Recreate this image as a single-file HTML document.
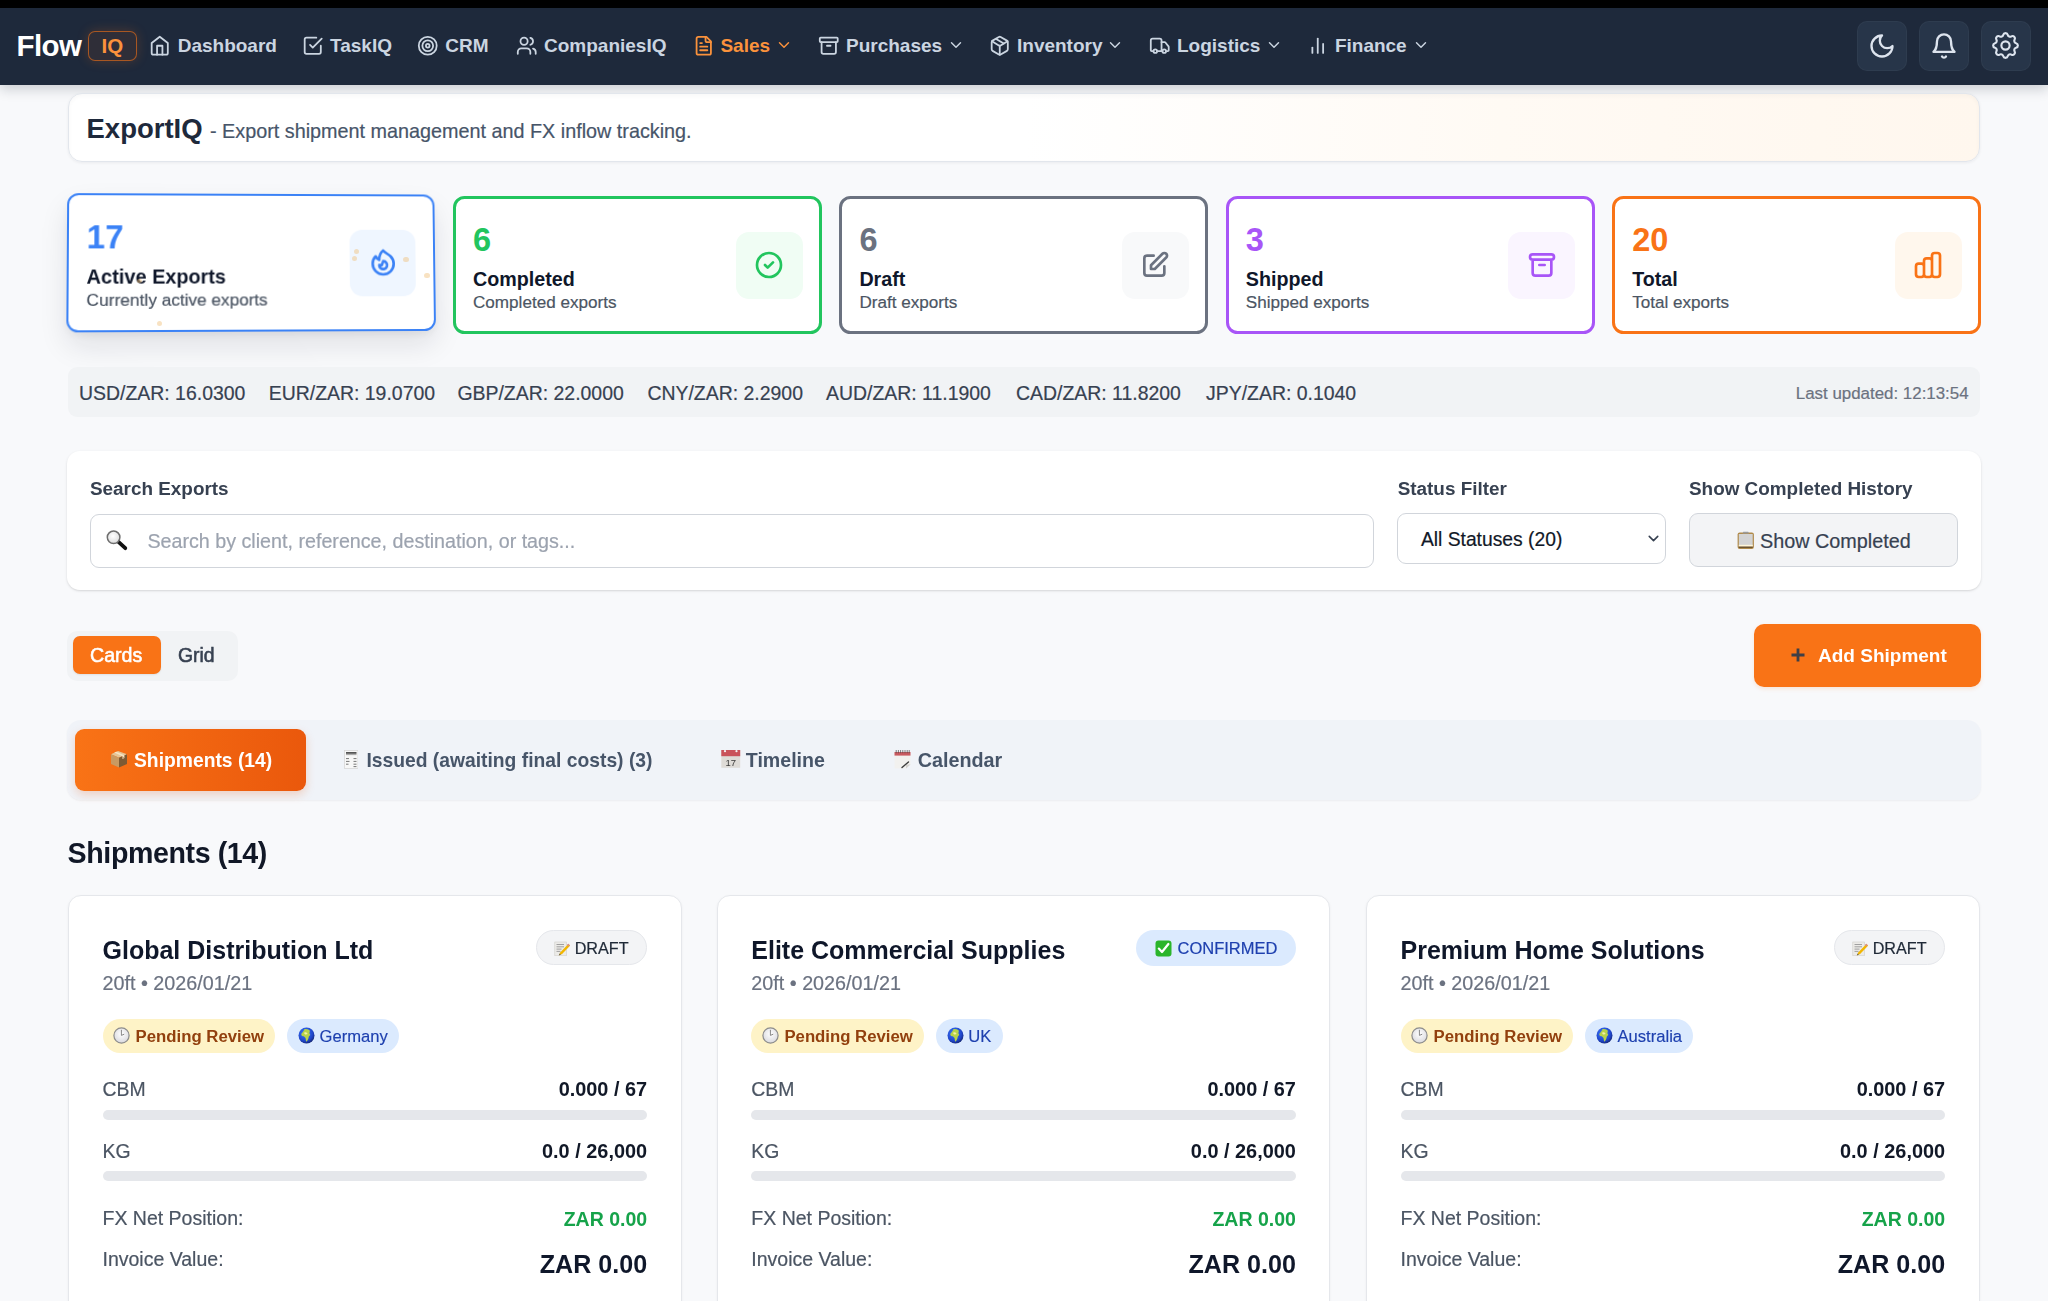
<!DOCTYPE html>
<html><head><meta charset="utf-8"><title>ExportIQ</title>
<style>
html,body{margin:0;padding:0}
body{width:2048px;height:1301px;overflow:hidden;position:relative;background:#f8f9fb;font-family:"Liberation Sans",sans-serif;}
.t{position:absolute;line-height:1;white-space:nowrap}
svg{display:block}
</style></head><body>
<div style="position:absolute;left:0.0px;top:0.0px;width:2048.0px;height:8.0px;box-sizing:border-box;background:#000"></div><div style="position:absolute;left:0.0px;top:8.0px;width:2048.0px;height:77.0px;box-sizing:border-box;background:#1e293b;box-shadow:0 4px 12px rgba(15,23,42,.2)"></div><div class="t" style="left:16.6px;top:31.0px;font-size:29.5px;color:#ffffff;font-weight:700;letter-spacing:-0.6px">Flow</div><div style="position:absolute;left:88.3px;top:31.0px;width:49.0px;height:30.0px;box-sizing:border-box;background:rgba(249,115,22,.08);border:1.3px solid rgba(249,115,22,.6);border-radius:7px;box-shadow:0 0 12px rgba(249,115,22,.22)"></div><div class="t" style="left:101.5px;top:36.0px;font-size:20.5px;color:#fb923c;font-weight:700;">IQ</div><svg style="position:absolute;left:149.2px;top:34.9px;" width="21.5" height="21.5" viewBox="0 0 24 24" fill="none" stroke="#cbd5e1" stroke-width="2" stroke-linecap="round" stroke-linejoin="round"><path d="m3 9 9-7 9 7v11a2 2 0 0 1-2 2H5a2 2 0 0 1-2-2z"/><polyline points="9 22 9 12 15 12 15 22"/></svg><div class="t" style="left:177.7px;top:36.0px;font-size:19px;color:#cbd5e1;font-weight:700;">Dashboard</div><svg style="position:absolute;left:302.0px;top:34.9px;" width="21.5" height="21.5" viewBox="0 0 24 24" fill="none" stroke="#cbd5e1" stroke-width="2" stroke-linecap="round" stroke-linejoin="round"><path d="m9 11 3 3L22 4"/><path d="M21 12v7a2 2 0 0 1-2 2H5a2 2 0 0 1-2-2V5a2 2 0 0 1 2-2h11"/></svg><div class="t" style="left:330.0px;top:36.0px;font-size:19px;color:#cbd5e1;font-weight:700;">TaskIQ</div><svg style="position:absolute;left:416.9px;top:34.9px;" width="21.5" height="21.5" viewBox="0 0 24 24" fill="none" stroke="#cbd5e1" stroke-width="2" stroke-linecap="round" stroke-linejoin="round"><circle cx="12" cy="12" r="10"/><circle cx="12" cy="12" r="6"/><circle cx="12" cy="12" r="2"/></svg><div class="t" style="left:445.3px;top:36.0px;font-size:19px;color:#cbd5e1;font-weight:700;">CRM</div><svg style="position:absolute;left:515.8px;top:34.9px;" width="21.5" height="21.5" viewBox="0 0 24 24" fill="none" stroke="#cbd5e1" stroke-width="2" stroke-linecap="round" stroke-linejoin="round"><path d="M16 21v-2a4 4 0 0 0-4-4H6a4 4 0 0 0-4 4v2"/><circle cx="9" cy="7" r="4"/><path d="M22 21v-2a4 4 0 0 0-3-3.87"/><path d="M16 3.13a4 4 0 0 1 0 7.75"/></svg><div class="t" style="left:544.0px;top:36.0px;font-size:19px;color:#cbd5e1;font-weight:700;">CompaniesIQ</div><svg style="position:absolute;left:692.5px;top:34.9px;" width="21.5" height="21.5" viewBox="0 0 24 24" fill="none" stroke="#fb923c" stroke-width="2" stroke-linecap="round" stroke-linejoin="round"><path d="M15 2H6a2 2 0 0 0-2 2v16a2 2 0 0 0 2 2h12a2 2 0 0 0 2-2V7Z"/><path d="M14 2v4a2 2 0 0 0 2 2h4"/><path d="M10 9H8"/><path d="M16 13H8"/><path d="M16 17H8"/></svg><div class="t" style="left:720.4px;top:36.0px;font-size:19px;color:#fb923c;font-weight:700;">Sales</div><svg style="position:absolute;left:774.9px;top:35.9px;" width="18" height="18" viewBox="0 0 24 24" fill="none" stroke="#fb923c" stroke-width="1.9" stroke-linecap="round" stroke-linejoin="round"><path d="m6 9 6 6 6-6"/></svg><svg style="position:absolute;left:818.1px;top:34.9px;" width="21.5" height="21.5" viewBox="0 0 24 24" fill="none" stroke="#cbd5e1" stroke-width="2" stroke-linecap="round" stroke-linejoin="round"><rect width="20" height="5" x="2" y="3" rx="1"/><path d="M4 8v11a2 2 0 0 0 2 2h12a2 2 0 0 0 2-2V8"/><path d="M10 12h4"/></svg><div class="t" style="left:846.0px;top:36.0px;font-size:19px;color:#cbd5e1;font-weight:700;">Purchases</div><svg style="position:absolute;left:946.8px;top:35.9px;" width="18" height="18" viewBox="0 0 24 24" fill="none" stroke="#cbd5e1" stroke-width="1.9" stroke-linecap="round" stroke-linejoin="round"><path d="m6 9 6 6 6-6"/></svg><svg style="position:absolute;left:989.0px;top:34.9px;" width="21.5" height="21.5" viewBox="0 0 24 24" fill="none" stroke="#cbd5e1" stroke-width="2" stroke-linecap="round" stroke-linejoin="round"><path d="M11 21.73a2 2 0 0 0 2 0l7-4A2 2 0 0 0 21 16V8a2 2 0 0 0-1-1.73l-7-4a2 2 0 0 0-2 0l-7 4A2 2 0 0 0 3 8v8a2 2 0 0 0 1 1.73z"/><path d="M12 22V12"/><path d="m3.3 7 7.703 4.734a2 2 0 0 0 1.994 0L20.7 7"/><path d="m7.5 4.27 9 5.15"/></svg><div class="t" style="left:1017.0px;top:36.0px;font-size:19px;color:#cbd5e1;font-weight:700;">Inventory</div><svg style="position:absolute;left:1106.2px;top:35.9px;" width="18" height="18" viewBox="0 0 24 24" fill="none" stroke="#cbd5e1" stroke-width="1.9" stroke-linecap="round" stroke-linejoin="round"><path d="m6 9 6 6 6-6"/></svg><svg style="position:absolute;left:1149.0px;top:34.9px;" width="21.5" height="21.5" viewBox="0 0 24 24" fill="none" stroke="#cbd5e1" stroke-width="2" stroke-linecap="round" stroke-linejoin="round"><path d="M14 18V6a2 2 0 0 0-2-2H4a2 2 0 0 0-2 2v11a1 1 0 0 0 1 1h2"/><path d="M15 18H9"/><path d="M19 18h2a1 1 0 0 0 1-1v-3.65a1 1 0 0 0-.22-.624l-3.48-4.35A1 1 0 0 0 17.52 8H14"/><circle cx="17" cy="18" r="2"/><circle cx="7" cy="18" r="2"/></svg><div class="t" style="left:1177.0px;top:36.0px;font-size:19px;color:#cbd5e1;font-weight:700;">Logistics</div><svg style="position:absolute;left:1264.8px;top:35.9px;" width="18" height="18" viewBox="0 0 24 24" fill="none" stroke="#cbd5e1" stroke-width="1.9" stroke-linecap="round" stroke-linejoin="round"><path d="m6 9 6 6 6-6"/></svg><svg style="position:absolute;left:1306.8px;top:34.9px;" width="21.5" height="21.5" viewBox="0 0 24 24" fill="none" stroke="#cbd5e1" stroke-width="2" stroke-linecap="round" stroke-linejoin="round"><path d="M18 20V10"/><path d="M12 20V4"/><path d="M6 20v-6"/></svg><div class="t" style="left:1334.9px;top:36.0px;font-size:19px;color:#cbd5e1;font-weight:700;">Finance</div><svg style="position:absolute;left:1412.2px;top:35.9px;" width="18" height="18" viewBox="0 0 24 24" fill="none" stroke="#cbd5e1" stroke-width="1.9" stroke-linecap="round" stroke-linejoin="round"><path d="m6 9 6 6 6-6"/></svg><div style="position:absolute;left:1857.0px;top:20.5px;width:50.0px;height:50.0px;box-sizing:border-box;background:#273549;border:1px solid rgba(255,255,255,.035);border-radius:10px"></div><svg style="position:absolute;left:1868.0px;top:31.5px;" width="28" height="28" viewBox="0 0 24 24" fill="none" stroke="#dde4ee" stroke-width="2.0" stroke-linecap="round" stroke-linejoin="round"><path d="M12 3a6 6 0 0 0 9 9 9 9 0 1 1-9-9Z"/></svg><div style="position:absolute;left:1919.0px;top:20.5px;width:50.0px;height:50.0px;box-sizing:border-box;background:#273549;border:1px solid rgba(255,255,255,.035);border-radius:10px"></div><svg style="position:absolute;left:1930.0px;top:31.5px;" width="28" height="28" viewBox="0 0 24 24" fill="none" stroke="#dde4ee" stroke-width="2.0" stroke-linecap="round" stroke-linejoin="round"><path d="M6 8a6 6 0 0 1 12 0c0 7 3 9 3 9H3s3-2 3-9"/><path d="M10.3 21a1.94 1.94 0 0 0 3.4 0"/></svg><div style="position:absolute;left:1980.5px;top:20.5px;width:50.0px;height:50.0px;box-sizing:border-box;background:#273549;border:1px solid rgba(255,255,255,.035);border-radius:10px"></div><svg style="position:absolute;left:1989.0px;top:29.1px;" width="33" height="33" viewBox="0 0 24 24" fill="none" stroke="#dde4ee" stroke-width="1.55" stroke-linecap="round" stroke-linejoin="round"><path d="M10.325 4.317c.426-1.756 2.924-1.756 3.35 0a1.724 1.724 0 002.573 1.066c1.543-.94 3.31.826 2.37 2.37a1.724 1.724 0 001.065 2.572c1.756.426 1.756 2.924 0 3.35a1.724 1.724 0 00-1.066 2.573c.94 1.543-.826 3.31-2.37 2.37a1.724 1.724 0 00-2.572 1.065c-.426 1.756-2.924 1.756-3.35 0a1.724 1.724 0 00-2.573-1.066c-1.543.94-3.31-.826-2.37-2.37a1.724 1.724 0 00-1.065-2.572c-1.756-.426-1.756-2.924 0-3.35a1.724 1.724 0 001.066-2.573c-.94-1.543.826-3.31 2.37-2.37.996.608 2.296.07 2.572-1.065z"/><path d="M15 12a3 3 0 11-6 0 3 3 0 016 0z"/></svg><div style="position:absolute;left:68.0px;top:93.0px;width:1912.0px;height:69.0px;box-sizing:border-box;background:linear-gradient(90deg,#ffffff 0%,#ffffff 50%,#fffaf4 75%,#fff7ee 100%);border:1px solid #e2e6ec;border-radius:14px;box-shadow:0 1px 3px rgba(15,23,42,.06), inset 0 2px 4px rgba(15,23,42,.03)"></div><div class="t" style="left:86.5px;top:115.0px;font-size:27.5px;color:#1e293b;font-weight:700;">ExportIQ</div><div class="t" style="left:210.0px;top:122.0px;font-size:19.8px;color:#475569;-webkit-text-stroke:0.2px #475569;">- Export shipment management and FX inflow tracking.</div><div style="position:absolute;left:453.0px;top:196.1px;width:369.1px;height:138.0px;box-sizing:border-box;background:#fff;border:3px solid #22c55e;border-radius:11.5px"></div><div class="t" style="left:473.0px;top:224.0px;font-size:32.5px;color:#22c55e;font-weight:700;">6</div><div class="t" style="left:473.0px;top:270.0px;font-size:19.7px;color:#0f172a;font-weight:700;">Completed</div><div class="t" style="left:473.0px;top:294.0px;font-size:17.1px;color:#4b5563;-webkit-text-stroke:0.2px #4b5563;">Completed exports</div><div style="position:absolute;left:735.5px;top:231.6px;width:67.0px;height:67.0px;box-sizing:border-box;background:#f0fdf4;border-radius:13px"></div><svg style="position:absolute;left:753.0px;top:249.1px;" width="32" height="32" viewBox="0 0 24 24" fill="none" stroke="#22c55e" stroke-width="2" stroke-linecap="round" stroke-linejoin="round"><path d="M9 12l2 2 4-4m6 2a9 9 0 11-18 0 9 9 0 0118 0z"/></svg><div style="position:absolute;left:839.4px;top:196.1px;width:369.1px;height:138.0px;box-sizing:border-box;background:#fff;border:3px solid #6b7280;border-radius:11.5px"></div><div class="t" style="left:859.4px;top:224.0px;font-size:32.5px;color:#6b7280;font-weight:700;">6</div><div class="t" style="left:859.4px;top:270.0px;font-size:19.7px;color:#0f172a;font-weight:700;">Draft</div><div class="t" style="left:859.4px;top:294.0px;font-size:17.1px;color:#4b5563;-webkit-text-stroke:0.2px #4b5563;">Draft exports</div><div style="position:absolute;left:1121.9px;top:231.6px;width:67.0px;height:67.0px;box-sizing:border-box;background:#f8f9fa;border-radius:13px"></div><svg style="position:absolute;left:1139.4px;top:249.1px;" width="32" height="32" viewBox="0 0 24 24" fill="none" stroke="#6b7280" stroke-width="2" stroke-linecap="round" stroke-linejoin="round"><path d="M11 5H6a2 2 0 00-2 2v11a2 2 0 002 2h11a2 2 0 002-2v-5m-1.414-9.414a2 2 0 112.828 2.828L11.828 15H9v-2.828l8.586-8.586z"/></svg><div style="position:absolute;left:1225.8px;top:196.1px;width:369.1px;height:138.0px;box-sizing:border-box;background:#fff;border:3px solid #a855f7;border-radius:11.5px"></div><div class="t" style="left:1245.8px;top:224.0px;font-size:32.5px;color:#a855f7;font-weight:700;">3</div><div class="t" style="left:1245.8px;top:270.0px;font-size:19.7px;color:#0f172a;font-weight:700;">Shipped</div><div class="t" style="left:1245.8px;top:294.0px;font-size:17.1px;color:#4b5563;-webkit-text-stroke:0.2px #4b5563;">Shipped exports</div><div style="position:absolute;left:1508.3px;top:231.6px;width:67.0px;height:67.0px;box-sizing:border-box;background:#faf5ff;border-radius:13px"></div><svg style="position:absolute;left:1525.8px;top:249.1px;" width="32" height="32" viewBox="0 0 24 24" fill="none" stroke="#a855f7" stroke-width="2" stroke-linecap="round" stroke-linejoin="round"><path d="M5 8h14M5 8a2 2 0 110-4h14a2 2 0 110 4M5 8v10a2 2 0 002 2h10a2 2 0 002-2V8m-9 4h4"/></svg><div style="position:absolute;left:1612.2px;top:196.1px;width:369.1px;height:138.0px;box-sizing:border-box;background:#fff;border:3px solid #f97316;border-radius:11.5px"></div><div class="t" style="left:1632.2px;top:224.0px;font-size:32.5px;color:#f97316;font-weight:700;">20</div><div class="t" style="left:1632.2px;top:270.0px;font-size:19.7px;color:#0f172a;font-weight:700;">Total</div><div class="t" style="left:1632.2px;top:294.0px;font-size:17.1px;color:#4b5563;-webkit-text-stroke:0.2px #4b5563;">Total exports</div><div style="position:absolute;left:1894.7px;top:231.6px;width:67.0px;height:67.0px;box-sizing:border-box;background:#fff7ed;border-radius:13px"></div><svg style="position:absolute;left:1912.2px;top:249.1px;" width="32" height="32" viewBox="0 0 24 24" fill="none" stroke="#f97316" stroke-width="2" stroke-linecap="round" stroke-linejoin="round"><path d="M9 19v-6a2 2 0 00-2-2H5a2 2 0 00-2 2v6a2 2 0 002 2h2a2 2 0 002-2zm0 0V9a2 2 0 012-2h2a2 2 0 012 2v10m-6 0a2 2 0 002 2h2a2 2 0 002-2m0 0V5a2 2 0 012-2h2a2 2 0 012 2v14a2 2 0 01-2 2h-2a2 2 0 01-2-2z"/></svg><div style="position:absolute;left:0;top:0;width:2048px;height:1301px;transform-origin:251px 264.8px;transform:translate(1.4px,-2.5px) perspective(1000px) rotateY(3.29deg) rotateX(2.9deg)"><div style="position:absolute;left:66.6px;top:196.1px;width:369.1px;height:138.0px;box-sizing:border-box;box-shadow:0 14px 28px rgba(15,23,42,.10),0 4px 8px rgba(15,23,42,.05);border-radius:13px"></div><div style="position:absolute;left:66.6px;top:196.1px;width:369.1px;height:138.0px;box-sizing:border-box;background:#fff;border:2.6px solid #3b82f6;border-radius:11.5px"></div><div class="t" style="left:86.6px;top:224.0px;font-size:32.5px;color:#3b82f6;font-weight:700;">17</div><div class="t" style="left:86.6px;top:270.0px;font-size:19.7px;color:#0f172a;font-weight:700;">Active Exports</div><div class="t" style="left:86.6px;top:294.0px;font-size:17.1px;color:#4b5563;-webkit-text-stroke:0.2px #4b5563;">Currently active exports</div><div style="position:absolute;left:349.1px;top:231.6px;width:67.0px;height:67.0px;box-sizing:border-box;background:#eff6ff;border-radius:13px"></div><svg style="position:absolute;left:366.6px;top:249.1px;" width="32" height="32" viewBox="0 0 24 24" fill="none" stroke="#3b82f6" stroke-width="2" stroke-linecap="round" stroke-linejoin="round"><path d="M17.657 18.657A8 8 0 016.343 7.343S7 9 9 10c0-2 .5-5 2.986-7C14 5 16.09 5.777 17.656 7.343A7.975 7.975 0 0120 13a7.975 7.975 0 01-2.343 5.657z"/><path d="M9.879 16.121A3 3 0 1012.015 11L11 14H9c0 .768.293 1.536.879 2.121z"/></svg></div><div style="position:absolute;left:354.29999999999995px;top:248.5px;width:5.2px;height:5.2px;border-radius:50%;background:rgba(240,190,120,.45);filter:blur(0.5px)"></div><div style="position:absolute;left:352.29999999999995px;top:255.79999999999998px;width:5.2px;height:5.2px;border-radius:50%;background:rgba(240,190,120,.45);filter:blur(0.5px)"></div><div style="position:absolute;left:403.2px;top:256.59999999999997px;width:5.6px;height:5.6px;border-radius:50%;background:rgba(240,190,120,.45);filter:blur(0.5px)"></div><div style="position:absolute;left:424.0px;top:272.9px;width:5.6px;height:5.6px;border-radius:50%;background:rgba(240,190,120,.45);filter:blur(0.5px)"></div><div style="position:absolute;left:137.4px;top:278.5px;width:4.8px;height:4.8px;border-radius:50%;background:rgba(240,190,120,.45);filter:blur(0.5px)"></div><div style="position:absolute;left:156.70000000000002px;top:321.0px;width:5.2px;height:5.2px;border-radius:50%;background:rgba(240,190,120,.45);filter:blur(0.5px)"></div><div style="position:absolute;left:67.8px;top:367.0px;width:1912.7px;height:50.3px;box-sizing:border-box;background:#f1f3f5;border-radius:9px"></div><div class="t" style="left:79.0px;top:384.0px;font-size:19.45px;color:#374151;-webkit-text-stroke:0.2px #374151;">USD/ZAR: 16.0300</div><div class="t" style="left:268.7px;top:384.0px;font-size:19.45px;color:#374151;-webkit-text-stroke:0.2px #374151;">EUR/ZAR: 19.0700</div><div class="t" style="left:457.4px;top:384.0px;font-size:19.45px;color:#374151;-webkit-text-stroke:0.2px #374151;">GBP/ZAR: 22.0000</div><div class="t" style="left:647.4px;top:384.0px;font-size:19.45px;color:#374151;-webkit-text-stroke:0.2px #374151;">CNY/ZAR: 2.2900</div><div class="t" style="left:826.0px;top:384.0px;font-size:19.45px;color:#374151;-webkit-text-stroke:0.2px #374151;">AUD/ZAR: 11.1900</div><div class="t" style="left:1016.0px;top:384.0px;font-size:19.45px;color:#374151;-webkit-text-stroke:0.2px #374151;">CAD/ZAR: 11.8200</div><div class="t" style="left:1206.0px;top:384.0px;font-size:19.45px;color:#374151;-webkit-text-stroke:0.2px #374151;">JPY/ZAR: 0.1040</div><div class="t" style="right:79.4px;top:386.0px;font-size:16.9px;color:#6b7280;-webkit-text-stroke:0.2px #6b7280;">Last updated: 12:13:54</div><div style="position:absolute;left:67.0px;top:451.3px;width:1913.5px;height:139.0px;box-sizing:border-box;background:#fff;border-radius:13px;box-shadow:0 1px 3px rgba(0,0,0,.1),0 1px 2px rgba(0,0,0,.06)"></div><div class="t" style="left:90.0px;top:480.0px;font-size:18.9px;color:#374151;font-weight:700;">Search Exports</div><div style="position:absolute;left:90.0px;top:513.5px;width:1284.0px;height:54.0px;box-sizing:border-box;background:#fff;border:1.5px solid #d1d5db;border-radius:9px"></div><div class="t" style="left:147.4px;top:532.0px;font-size:19.7px;color:#9ca3af;-webkit-text-stroke:0.2px #9ca3af;">Search by client, reference, destination, or tags...</div><svg style="position:absolute;left:105px;top:528.5px" width="23" height="22" viewBox="0 0 23 22"><defs><radialGradient id="lens" cx="45%" cy="40%" r="60%"><stop offset="0" stop-color="#ffffff"/><stop offset="1" stop-color="#dcdcdc"/></radialGradient></defs><path d="M13.2 12.6 20.3 19.2" stroke="#111" stroke-width="3.8" stroke-linecap="round"/><circle cx="8.6" cy="8.3" r="6.3" fill="url(#lens)" stroke="#6e6e6e" stroke-width="1.5"/></svg><div class="t" style="left:1397.7px;top:480.0px;font-size:18.9px;color:#374151;font-weight:700;">Status Filter</div><div style="position:absolute;left:1397.0px;top:513.4px;width:269.0px;height:50.4px;box-sizing:border-box;background:#fff;border:1.5px solid #d1d5db;border-radius:9px"></div><div class="t" style="left:1420.9px;top:530.0px;font-size:19.3px;color:#111827;-webkit-text-stroke:0.2px #111827;">All Statuses (20)</div><svg style="position:absolute;left:1645.0px;top:530.0px;" width="17" height="17" viewBox="0 0 24 24" fill="none" stroke="#374151" stroke-width="2.2" stroke-linecap="round" stroke-linejoin="round"><path d="m6 9 6 6 6-6"/></svg><div class="t" style="left:1689.0px;top:480.0px;font-size:18.9px;color:#374151;font-weight:700;">Show Completed History</div><div style="position:absolute;left:1689.0px;top:513.3px;width:268.7px;height:53.5px;box-sizing:border-box;background:#f3f4f6;border:1.5px solid #d1d5db;border-radius:9px"></div><div class="t" style="left:1760.0px;top:532.0px;font-size:19.8px;color:#374151;-webkit-text-stroke:0.2px #374151;">Show Completed</div><svg style="position:absolute;left:1736.5px;top:531px" width="17.5" height="18.5" viewBox="0 0 17.5 18.5"><rect x="0.6" y="1.6" width="16.3" height="16.3" rx="2" fill="#b08a4a"/><rect x="1.8" y="3" width="13.9" height="12.6" fill="#d3d3d3"/><rect x="1.8" y="13.8" width="13.9" height="1.6" fill="#fff6d8"/><rect x="1.8" y="15.6" width="13.9" height="1.4" fill="#6b5430"/><path d="M5.5 2.6h6.5l-.8-1.8H6.3z" fill="#9a9a9a"/></svg><div style="position:absolute;left:67.0px;top:630.5px;width:171.0px;height:50.3px;box-sizing:border-box;background:#f1f3f5;border-radius:10px"></div><div style="position:absolute;left:73.0px;top:635.9px;width:87.8px;height:38.5px;box-sizing:border-box;background:#f97316;border-radius:7px;box-shadow:0 1px 2px rgba(0,0,0,.08)"></div><div class="t" style="left:90.0px;top:646.0px;font-size:19.6px;color:#ffffff;-webkit-text-stroke:0.55px #fff">Cards</div><div class="t" style="left:178.0px;top:646.0px;font-size:19.4px;color:#374151;-webkit-text-stroke:0.55px #374151">Grid</div><div style="position:absolute;left:1753.5px;top:624.1px;width:227.2px;height:62.6px;box-sizing:border-box;background:#f97316;border-radius:10px;box-shadow:0 2px 4px rgba(249,115,22,.15)"></div><svg style="position:absolute;left:1789.5px;top:646.5px" width="16" height="16" viewBox="0 0 16 16"><path d="M8 1.5v13M1.5 8h13" stroke="#3f3f46" stroke-width="2.8" stroke-linecap="butt"/></svg><div class="t" style="left:1818.0px;top:646.0px;font-size:19px;color:#ffffff;font-weight:700;">Add Shipment</div><div style="position:absolute;left:67.0px;top:720.0px;width:1914.0px;height:79.8px;box-sizing:border-box;background:#f0f3f8;border-radius:14px;box-shadow:0 1px 2px rgba(15,23,42,.05)"></div><div style="position:absolute;left:75.4px;top:728.6px;width:230.9px;height:62.1px;box-sizing:border-box;background:linear-gradient(90deg,#f97316,#ea580c);border-radius:9px;box-shadow:0 4px 10px rgba(234,88,12,.22)"></div><div class="t" style="left:134.0px;top:751.0px;font-size:19.3px;color:#ffffff;font-weight:700;">Shipments (14)</div><div class="t" style="left:366.4px;top:751.0px;font-size:19.3px;color:#475569;font-weight:700;">Issued (awaiting final costs) (3)</div><div class="t" style="left:745.8px;top:751.0px;font-size:19.6px;color:#475569;font-weight:700;">Timeline</div><div class="t" style="left:917.7px;top:751.0px;font-size:19.75px;color:#475569;font-weight:700;">Calendar</div><svg style="position:absolute;left:110px;top:750px" width="18" height="18" viewBox="0 0 18 18"><path d="M1 4.2 8 1l9 3.2-8 3.6z" fill="#e6c596"/><path d="M1 4.2 9 7.8V17.5L1 14z" fill="#c99a62"/><path d="M9 7.8 17 4.2V14l-8 3.5z" fill="#7d5a34"/><path d="M4.2 2.6l8.2 3.6v2.8l2-.9V5.3L6.2 1.8z" fill="#f5e3c3"/><path d="M12.4 6.2v2.8l2-.9" fill="#b8946a"/></svg><svg style="position:absolute;left:343.5px;top:749.5px" width="14.5" height="19" viewBox="0 0 14.5 19"><rect x="0.5" y="0.5" width="13.5" height="18" fill="#f7f7f7" stroke="#d8d8d8" stroke-width="0.8"/><rect x="2" y="2" width="10.5" height="1.8" fill="#555"/><rect x="2" y="4.2" width="10.5" height="0.9" fill="#999"/><path d="M2 8.6h3M9.5 8.6h3M2 11.4h3.5M9.5 11.4h3M2 14.2h2.5M9.5 14.2h3M9.5 16.6h3" stroke="#777" stroke-width="1"/></svg><svg style="position:absolute;left:721px;top:749.4px" width="19.5" height="19" viewBox="0 0 19.5 19"><rect x="0.3" y="1" width="18.9" height="17.8" fill="#dedbd7"/><rect x="0.3" y="1" width="18.9" height="6.2" fill="#c9525a"/><circle cx="4" cy="2.2" r="1.1" fill="#f4f4f4"/><circle cx="15.5" cy="2.2" r="1.1" fill="#f4f4f4"/><text x="9.8" y="17" font-family="Liberation Sans" font-size="9.5" text-anchor="middle" fill="#3a3a3a">17</text></svg><svg style="position:absolute;left:893px;top:749px" width="19" height="20" viewBox="0 0 19 20"><path d="M1.5 3h16v12.5L13 19.5H1.5z" fill="#f2f1ef"/><path d="M17.5 15.5 13 19.5v-3.2a.8.8 0 0 1 .8-.8z" fill="#d4d2cf"/><rect x="1.5" y="3" width="16" height="3.6" fill="#c95a60"/><path d="M3.2 1v3.2M5.4 1v3.2M7.6 1v3.2M9.8 1v3.2M12 1v3.2M14.2 1v3.2M16.2 1v3.2" stroke="#4a4a4a" stroke-width="0.7"/><path d="M9 18.5 15.5 13" stroke="#3c3c3c" stroke-width="1.4" stroke-linecap="round"/></svg><div class="t" style="left:67.6px;top:839.0px;font-size:28.6px;color:#111827;font-weight:700;letter-spacing:-0.4px">Shipments (14)</div><div style="position:absolute;left:68.1px;top:895.2px;width:613.6px;height:460.0px;box-sizing:border-box;background:#fff;border:1px solid #e5e7eb;border-radius:13px;box-shadow:0 1px 3px rgba(0,0,0,.05)"></div><div class="t" style="left:102.5px;top:938.0px;font-size:25px;color:#0f172a;font-weight:700;">Global Distribution Ltd</div><div class="t" style="left:102.5px;top:974.0px;font-size:19.75px;color:#6b7280;-webkit-text-stroke:0.2px #6b7280;">20ft &bull; 2026/01/21</div><div style="position:absolute;left:535.8px;top:929.8px;width:111.3px;height:35.5px;box-sizing:border-box;background:#f3f4f6;border:1px solid #e5e7eb;border-radius:18px"></div><svg style="position:absolute;left:554.1px;top:940.5px" width="15.5" height="15.5" viewBox="0 0 15.5 15.5"><rect x="0.8" y="1" width="11.5" height="13.8" fill="#ecebe8" stroke="#cfcdc8" stroke-width="0.6"/><path d="M2.5 3.5h7.5M2.5 5.8h7.5M2.5 8.1h5M2.5 10.4h4" stroke="#8d8d8d" stroke-width="0.8"/><path d="M14.6 2.8 6.4 11.2l-1.6 3.2 3.3-1.5 8.1-8.3z" fill="#f2b600"/><path d="M14.6 2.8l1 1.8-.9.9-1.9-1.8z" fill="#d98b8b"/><path d="M4.8 14.4l.9-1.9 1.1 1z" fill="#555"/></svg><div class="t" style="right:1419.4px;top:940.0px;font-size:16.2px;color:#1f2937;-webkit-text-stroke:0.2px #1f2937">DRAFT</div><div style="position:absolute;left:102.5px;top:1019.0px;width:172.6px;height:33.8px;box-sizing:border-box;background:#fef3c7;border-radius:17px"></div><svg style="position:absolute;left:113.0px;top:1027.3px" width="17" height="17" viewBox="0 0 17 17"><defs><radialGradient id="cf" cx="50%" cy="40%" r="60%"><stop offset="0" stop-color="#ffffff"/><stop offset="1" stop-color="#d9d9de"/></radialGradient></defs><circle cx="8.5" cy="8.5" r="7.6" fill="url(#cf)" stroke="#8c8c8c" stroke-width="1.2"/><path d="M8.4 2.8v5.6l2.8-1.2" stroke="#7a7a7a" stroke-width="0.9" fill="none"/></svg><div class="t" style="left:135.6px;top:1029.0px;font-size:16.75px;color:#92400e;font-weight:700;">Pending Review</div><div style="position:absolute;left:287.3px;top:1019.0px;width:111.6px;height:33.8px;box-sizing:border-box;background:#dbeafe;border-radius:17px"></div><svg style="position:absolute;left:298.1px;top:1027.4px" width="17" height="17" viewBox="0 0 17 17"><defs><radialGradient id="gb" cx="40%" cy="35%" r="70%"><stop offset="0" stop-color="#3d7bff"/><stop offset="0.7" stop-color="#1f45c9"/><stop offset="1" stop-color="#14246e"/></radialGradient></defs><circle cx="8.5" cy="8.5" r="8" fill="url(#gb)"/><path d="M6.2 2.2c1.8-.3 3.6 0 5 .8.8.6.7 1.6.3 2.4-.5.7.2 1.2.6 1.8.3.6-.3 1.4-.9 1.9-.6.6-.5 1.6-.8 2.4-.4 1.2-1.1 2.4-1.9 3.2-.6-.7-.8-1.8-.8-2.8 0-1-.6-1.7-1.4-2.2-.9-.5-1.9-.4-2.6-1.1-.6-.6-.4-1.6 0-2.3.5-.7 1.2-1.1 1.5-1.9.2-.5.4-.9 1-1.2z" fill="#b7d24a"/><path d="M6.6 5.2c1-.2 2 .1 2.6.7.4.5.2 1.2-.3 1.4-.8.3-1.7.1-2.3-.4-.4-.4-.5-1.3 0-1.7z" fill="#f3f0a8"/></svg><div class="t" style="left:319.5px;top:1029.0px;font-size:16.6px;color:#1e40af;-webkit-text-stroke:0.15px #1e40af">Germany</div><div class="t" style="left:102.5px;top:1080.0px;font-size:19.4px;color:#4b5563;-webkit-text-stroke:0.2px #4b5563;">CBM</div><div class="t" style="right:1400.9px;top:1080.0px;font-size:19.9px;color:#111827;font-weight:700;">0.000 / 67</div><div style="position:absolute;left:102.5px;top:1109.5px;width:544.6px;height:10.3px;box-sizing:border-box;background:#e5e7eb;border-radius:6px"></div><div class="t" style="left:102.5px;top:1142.0px;font-size:19.4px;color:#4b5563;-webkit-text-stroke:0.2px #4b5563;">KG</div><div class="t" style="right:1400.9px;top:1142.0px;font-size:19.9px;color:#111827;font-weight:700;">0.0 / 26,000</div><div style="position:absolute;left:102.5px;top:1171.0px;width:544.6px;height:10.3px;box-sizing:border-box;background:#e5e7eb;border-radius:6px"></div><div class="t" style="left:102.5px;top:1209.0px;font-size:19.5px;color:#4b5563;-webkit-text-stroke:0.2px #4b5563;">FX Net Position:</div><div class="t" style="right:1400.9px;top:1210.0px;font-size:19.5px;color:#16a34a;font-weight:700;">ZAR 0.00</div><div class="t" style="left:102.5px;top:1250.0px;font-size:19.5px;color:#4b5563;-webkit-text-stroke:0.2px #4b5563;">Invoice Value:</div><div class="t" style="right:1400.9px;top:1252.0px;font-size:25.1px;color:#0f172a;font-weight:700;">ZAR 0.00</div><div style="position:absolute;left:716.9px;top:895.2px;width:613.6px;height:460.0px;box-sizing:border-box;background:#fff;border:1px solid #e5e7eb;border-radius:13px;box-shadow:0 1px 3px rgba(0,0,0,.05)"></div><div class="t" style="left:751.3px;top:938.0px;font-size:25px;color:#0f172a;font-weight:700;">Elite Commercial Supplies</div><div class="t" style="left:751.3px;top:974.0px;font-size:19.75px;color:#6b7280;-webkit-text-stroke:0.2px #6b7280;">20ft &bull; 2026/01/21</div><div style="position:absolute;left:1135.8px;top:929.5px;width:160.1px;height:36.3px;box-sizing:border-box;background:#dbeafe;border-radius:18px"></div><svg style="position:absolute;left:1154.6000000000001px;top:939.5px" width="17" height="17" viewBox="0 0 17 17"><rect x="0.5" y="0.5" width="16" height="16" rx="3" fill="#2bb52b"/><path d="M3.8 8.6 7 12 13.4 4" stroke="#fff" stroke-width="2.2" fill="none" stroke-linecap="round" stroke-linejoin="round"/></svg><div class="t" style="right:770.6px;top:940.0px;font-size:16.5px;color:#1e40af;-webkit-text-stroke:0.2px #1e40af">CONFIRMED</div><div style="position:absolute;left:751.3px;top:1019.0px;width:172.6px;height:33.8px;box-sizing:border-box;background:#fef3c7;border-radius:17px"></div><svg style="position:absolute;left:761.8px;top:1027.3px" width="17" height="17" viewBox="0 0 17 17"><defs><radialGradient id="cf" cx="50%" cy="40%" r="60%"><stop offset="0" stop-color="#ffffff"/><stop offset="1" stop-color="#d9d9de"/></radialGradient></defs><circle cx="8.5" cy="8.5" r="7.6" fill="url(#cf)" stroke="#8c8c8c" stroke-width="1.2"/><path d="M8.4 2.8v5.6l2.8-1.2" stroke="#7a7a7a" stroke-width="0.9" fill="none"/></svg><div class="t" style="left:784.4px;top:1029.0px;font-size:16.75px;color:#92400e;font-weight:700;">Pending Review</div><div style="position:absolute;left:936.1px;top:1019.0px;width:67.0px;height:33.8px;box-sizing:border-box;background:#dbeafe;border-radius:17px"></div><svg style="position:absolute;left:946.8999999999999px;top:1027.4px" width="17" height="17" viewBox="0 0 17 17"><defs><radialGradient id="gb" cx="40%" cy="35%" r="70%"><stop offset="0" stop-color="#3d7bff"/><stop offset="0.7" stop-color="#1f45c9"/><stop offset="1" stop-color="#14246e"/></radialGradient></defs><circle cx="8.5" cy="8.5" r="8" fill="url(#gb)"/><path d="M6.2 2.2c1.8-.3 3.6 0 5 .8.8.6.7 1.6.3 2.4-.5.7.2 1.2.6 1.8.3.6-.3 1.4-.9 1.9-.6.6-.5 1.6-.8 2.4-.4 1.2-1.1 2.4-1.9 3.2-.6-.7-.8-1.8-.8-2.8 0-1-.6-1.7-1.4-2.2-.9-.5-1.9-.4-2.6-1.1-.6-.6-.4-1.6 0-2.3.5-.7 1.2-1.1 1.5-1.9.2-.5.4-.9 1-1.2z" fill="#b7d24a"/><path d="M6.6 5.2c1-.2 2 .1 2.6.7.4.5.2 1.2-.3 1.4-.8.3-1.7.1-2.3-.4-.4-.4-.5-1.3 0-1.7z" fill="#f3f0a8"/></svg><div class="t" style="left:968.3px;top:1029.0px;font-size:16.6px;color:#1e40af;-webkit-text-stroke:0.15px #1e40af">UK</div><div class="t" style="left:751.3px;top:1080.0px;font-size:19.4px;color:#4b5563;-webkit-text-stroke:0.2px #4b5563;">CBM</div><div class="t" style="right:752.1px;top:1080.0px;font-size:19.9px;color:#111827;font-weight:700;">0.000 / 67</div><div style="position:absolute;left:751.3px;top:1109.5px;width:544.6px;height:10.3px;box-sizing:border-box;background:#e5e7eb;border-radius:6px"></div><div class="t" style="left:751.3px;top:1142.0px;font-size:19.4px;color:#4b5563;-webkit-text-stroke:0.2px #4b5563;">KG</div><div class="t" style="right:752.1px;top:1142.0px;font-size:19.9px;color:#111827;font-weight:700;">0.0 / 26,000</div><div style="position:absolute;left:751.3px;top:1171.0px;width:544.6px;height:10.3px;box-sizing:border-box;background:#e5e7eb;border-radius:6px"></div><div class="t" style="left:751.3px;top:1209.0px;font-size:19.5px;color:#4b5563;-webkit-text-stroke:0.2px #4b5563;">FX Net Position:</div><div class="t" style="right:752.1px;top:1210.0px;font-size:19.5px;color:#16a34a;font-weight:700;">ZAR 0.00</div><div class="t" style="left:751.3px;top:1250.0px;font-size:19.5px;color:#4b5563;-webkit-text-stroke:0.2px #4b5563;">Invoice Value:</div><div class="t" style="right:752.1px;top:1252.0px;font-size:25.1px;color:#0f172a;font-weight:700;">ZAR 0.00</div><div style="position:absolute;left:1366.1px;top:895.2px;width:613.6px;height:460.0px;box-sizing:border-box;background:#fff;border:1px solid #e5e7eb;border-radius:13px;box-shadow:0 1px 3px rgba(0,0,0,.05)"></div><div class="t" style="left:1400.5px;top:938.0px;font-size:25px;color:#0f172a;font-weight:700;">Premium Home Solutions</div><div class="t" style="left:1400.5px;top:974.0px;font-size:19.75px;color:#6b7280;-webkit-text-stroke:0.2px #6b7280;">20ft &bull; 2026/01/21</div><div style="position:absolute;left:1833.8px;top:929.8px;width:111.3px;height:35.5px;box-sizing:border-box;background:#f3f4f6;border:1px solid #e5e7eb;border-radius:18px"></div><svg style="position:absolute;left:1852.1px;top:940.5px" width="15.5" height="15.5" viewBox="0 0 15.5 15.5"><rect x="0.8" y="1" width="11.5" height="13.8" fill="#ecebe8" stroke="#cfcdc8" stroke-width="0.6"/><path d="M2.5 3.5h7.5M2.5 5.8h7.5M2.5 8.1h5M2.5 10.4h4" stroke="#8d8d8d" stroke-width="0.8"/><path d="M14.6 2.8 6.4 11.2l-1.6 3.2 3.3-1.5 8.1-8.3z" fill="#f2b600"/><path d="M14.6 2.8l1 1.8-.9.9-1.9-1.8z" fill="#d98b8b"/><path d="M4.8 14.4l.9-1.9 1.1 1z" fill="#555"/></svg><div class="t" style="right:121.4px;top:940.0px;font-size:16.2px;color:#1f2937;-webkit-text-stroke:0.2px #1f2937">DRAFT</div><div style="position:absolute;left:1400.5px;top:1019.0px;width:172.6px;height:33.8px;box-sizing:border-box;background:#fef3c7;border-radius:17px"></div><svg style="position:absolute;left:1411.0px;top:1027.3px" width="17" height="17" viewBox="0 0 17 17"><defs><radialGradient id="cf" cx="50%" cy="40%" r="60%"><stop offset="0" stop-color="#ffffff"/><stop offset="1" stop-color="#d9d9de"/></radialGradient></defs><circle cx="8.5" cy="8.5" r="7.6" fill="url(#cf)" stroke="#8c8c8c" stroke-width="1.2"/><path d="M8.4 2.8v5.6l2.8-1.2" stroke="#7a7a7a" stroke-width="0.9" fill="none"/></svg><div class="t" style="left:1433.6px;top:1029.0px;font-size:16.75px;color:#92400e;font-weight:700;">Pending Review</div><div style="position:absolute;left:1585.3px;top:1019.0px;width:108.0px;height:33.8px;box-sizing:border-box;background:#dbeafe;border-radius:17px"></div><svg style="position:absolute;left:1596.1px;top:1027.4px" width="17" height="17" viewBox="0 0 17 17"><defs><radialGradient id="gb" cx="40%" cy="35%" r="70%"><stop offset="0" stop-color="#3d7bff"/><stop offset="0.7" stop-color="#1f45c9"/><stop offset="1" stop-color="#14246e"/></radialGradient></defs><circle cx="8.5" cy="8.5" r="8" fill="url(#gb)"/><path d="M6.2 2.2c1.8-.3 3.6 0 5 .8.8.6.7 1.6.3 2.4-.5.7.2 1.2.6 1.8.3.6-.3 1.4-.9 1.9-.6.6-.5 1.6-.8 2.4-.4 1.2-1.1 2.4-1.9 3.2-.6-.7-.8-1.8-.8-2.8 0-1-.6-1.7-1.4-2.2-.9-.5-1.9-.4-2.6-1.1-.6-.6-.4-1.6 0-2.3.5-.7 1.2-1.1 1.5-1.9.2-.5.4-.9 1-1.2z" fill="#b7d24a"/><path d="M6.6 5.2c1-.2 2 .1 2.6.7.4.5.2 1.2-.3 1.4-.8.3-1.7.1-2.3-.4-.4-.4-.5-1.3 0-1.7z" fill="#f3f0a8"/></svg><div class="t" style="left:1617.5px;top:1029.0px;font-size:16.6px;color:#1e40af;-webkit-text-stroke:0.15px #1e40af">Australia</div><div class="t" style="left:1400.5px;top:1080.0px;font-size:19.4px;color:#4b5563;-webkit-text-stroke:0.2px #4b5563;">CBM</div><div class="t" style="right:102.9px;top:1080.0px;font-size:19.9px;color:#111827;font-weight:700;">0.000 / 67</div><div style="position:absolute;left:1400.5px;top:1109.5px;width:544.6px;height:10.3px;box-sizing:border-box;background:#e5e7eb;border-radius:6px"></div><div class="t" style="left:1400.5px;top:1142.0px;font-size:19.4px;color:#4b5563;-webkit-text-stroke:0.2px #4b5563;">KG</div><div class="t" style="right:102.9px;top:1142.0px;font-size:19.9px;color:#111827;font-weight:700;">0.0 / 26,000</div><div style="position:absolute;left:1400.5px;top:1171.0px;width:544.6px;height:10.3px;box-sizing:border-box;background:#e5e7eb;border-radius:6px"></div><div class="t" style="left:1400.5px;top:1209.0px;font-size:19.5px;color:#4b5563;-webkit-text-stroke:0.2px #4b5563;">FX Net Position:</div><div class="t" style="right:102.9px;top:1210.0px;font-size:19.5px;color:#16a34a;font-weight:700;">ZAR 0.00</div><div class="t" style="left:1400.5px;top:1250.0px;font-size:19.5px;color:#4b5563;-webkit-text-stroke:0.2px #4b5563;">Invoice Value:</div><div class="t" style="right:102.9px;top:1252.0px;font-size:25.1px;color:#0f172a;font-weight:700;">ZAR 0.00</div>
</body></html>
